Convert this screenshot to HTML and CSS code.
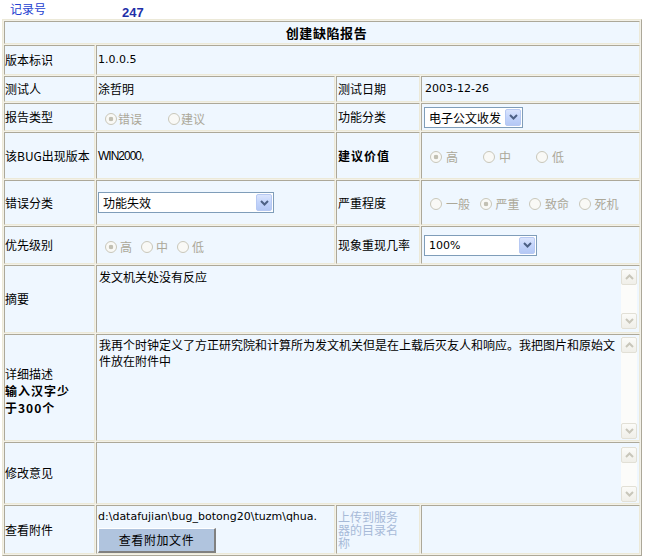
FILE: index.html
```html
<!DOCTYPE html>
<html lang="zh-CN">
<head>
<meta charset="utf-8">
<title>创建缺陷报告</title>
<link rel="stylesheet" href="styles.css">
</head>
<body>
<div class="topbar"><span class="rec-label">记录号</span><span class="rec-no">247</span></div>
<table class="form">
  <colgroup><col class="c1"><col class="c2"><col class="c3"><col class="c4"></colgroup>
  <tr class="h-title"><td colspan="4" class="title">创建缺陷报告</td></tr>
  <tr class="h1"><td class="lbl">版本标识</td><td colspan="3" class="val latin">1.0.0.5</td></tr>
  <tr class="h2"><td class="lbl">测试人</td><td class="val">涂哲明</td><td class="lbl3">测试日期</td><td class="val4 latin date">2003-12-26</td></tr>
  <tr class="h3">
    <td class="lbl">报告类型</td>
    <td class="val"><div class="rg rg-a"><span class="opt"><span class="rb on"></span>错误</span><span class="opt"><span class="rb"></span>建议</span></div></td>
    <td class="lbl3">功能分类</td>
    <td class="val4"><div class="sel sel-a"><span class="sel-text">电子公文收发</span><span class="sel-btn"><svg width="9" height="6" viewBox="0 0 9 6"><polyline points="1,1 4.5,4.5 8,1" fill="none" stroke="#4d6185" stroke-width="2"/></svg></span></div></td>
  </tr>
  <tr class="h4">
    <td class="lbl">该BUG出现版本</td>
    <td class="val win">WIN2000,</td>
    <td class="lbl3 bold">建议价值</td>
    <td class="val4"><div class="rg rg-b"><span class="opt"><span class="rb on"></span>高</span><span class="opt"><span class="rb"></span>中</span><span class="opt"><span class="rb"></span>低</span></div></td>
  </tr>
  <tr class="h5">
    <td class="lbl">错误分类</td>
    <td class="val"><div class="sel sel-b"><span class="sel-text">功能失效</span><span class="sel-btn"><svg width="9" height="6" viewBox="0 0 9 6"><polyline points="1,1 4.5,4.5 8,1" fill="none" stroke="#4d6185" stroke-width="2"/></svg></span></div></td>
    <td class="lbl3">严重程度</td>
    <td class="val4"><div class="rg rg-c"><span class="opt"><span class="rb"></span>一般</span><span class="opt"><span class="rb on"></span>严重</span><span class="opt"><span class="rb"></span>致命</span><span class="opt"><span class="rb"></span>死机</span></div></td>
  </tr>
  <tr class="h6">
    <td class="lbl">优先级别</td>
    <td class="val"><div class="rg rg-d"><span class="opt"><span class="rb on"></span>高</span><span class="opt"><span class="rb"></span>中</span><span class="opt"><span class="rb"></span>低</span></div></td>
    <td class="lbl3">现象重现几率</td>
    <td class="val4"><div class="sel sel-c"><span class="sel-text latin">100%</span><span class="sel-btn"><svg width="9" height="6" viewBox="0 0 9 6"><polyline points="1,1 4.5,4.5 8,1" fill="none" stroke="#4d6185" stroke-width="2"/></svg></span></div></td>
  </tr>
  <tr class="h7">
    <td class="lbl">摘要</td>
    <td colspan="3" class="tacell">
      <div class="ta ta-1">
        <div class="ta-text">发文机关处没有反应</div>
        <div class="sb"><span class="sb-btn"><svg width="9" height="6" viewBox="0 0 9 6"><polyline points="1,5 4.5,1.5 8,5" fill="none" stroke="#c8c6ba" stroke-width="2"/></svg></span><span class="sb-track"></span><span class="sb-btn"><svg width="9" height="6" viewBox="0 0 9 6"><polyline points="1,1 4.5,4.5 8,1" fill="none" stroke="#c8c6ba" stroke-width="2"/></svg></span></div>
      </div>
    </td>
  </tr>
  <tr class="h8">
    <td class="lbl desc">详细描述<br><b class="bold">输入汉字少<br>于300个</b></td>
    <td colspan="3" class="tacell">
      <div class="ta ta-2">
        <div class="ta-text">我再个时钟定义了方正研究院和计算所为发文机关但是在上载后灭友人和响应。我把图片和原始文件放在附件中</div>
        <div class="sb"><span class="sb-btn"><svg width="9" height="6" viewBox="0 0 9 6"><polyline points="1,5 4.5,1.5 8,5" fill="none" stroke="#c8c6ba" stroke-width="2"/></svg></span><span class="sb-track"></span><span class="sb-btn"><svg width="9" height="6" viewBox="0 0 9 6"><polyline points="1,1 4.5,4.5 8,1" fill="none" stroke="#c8c6ba" stroke-width="2"/></svg></span></div>
      </div>
    </td>
  </tr>
  <tr class="h9">
    <td class="lbl">修改意见</td>
    <td colspan="3" class="tacell">
      <div class="ta ta-3">
        <div class="ta-text"></div>
        <div class="sb"><span class="sb-btn"><svg width="9" height="6" viewBox="0 0 9 6"><polyline points="1,5 4.5,1.5 8,5" fill="none" stroke="#c8c6ba" stroke-width="2"/></svg></span><span class="sb-track"></span><span class="sb-btn"><svg width="9" height="6" viewBox="0 0 9 6"><polyline points="1,1 4.5,4.5 8,1" fill="none" stroke="#c8c6ba" stroke-width="2"/></svg></span></div>
      </div>
    </td>
  </tr>
  <tr class="h10">
    <td class="lbl">查看附件</td>
    <td class="val attach">
      <div class="path latin">d:\datafujian\bug_botong20\tuzm\qhua.</div>
      <div class="btn">查看附加文件</div>
    </td>
    <td class="lbl3"><div class="upload">上传到服务器的目录名称</div></td>
    <td class="val4"></td>
  </tr>
</table>
</body>
</html>
```
FILE: styles.css
```css
* { box-sizing: border-box; }

body {
  margin: 0;
  background: #ffffff;
  color: #000000;
  font-family: "Noto Sans CJK SC", "Liberation Sans", sans-serif;
  font-size: 12px;
}

.topbar {
  height: 19px;
  display: flex;
  align-items: flex-start;
}

.rec-label {
  width: 112px;
  margin-left: 10px;
  margin-top: 2px;
  line-height: 14px;
  color: #2541d0;
}

.rec-no {
  margin-top: 6px;
  font-family: "Liberation Sans", sans-serif;
  font-weight: bold;
  font-size: 13px;
  line-height: 13px;
  color: #1f2fa8;
}

.form {
  margin-left: 2px;
  width: 640px;
  table-layout: fixed;
  border-collapse: separate;
  border-spacing: 1px;
  border: 1px solid;
  border-color: #ece9d8 #aca899 #aca899 #ece9d8;
  background: #f3f1e8;
}

.c1 { width: 91px; }
.c2 { width: 239px; }
.c3 { width: 84px; }
.c4 { width: 219px; }

.form td {
  padding: 0;
  border: 1px solid;
  border-color: #aca899 #ece9d8 #ece9d8 #aca899;
  background: #eff7ff;
  vertical-align: middle;
  line-height: 14px;
  white-space: normal;
}

.h-title td { height: 23px; }
.h1 td { height: 30px; }
.h2 td { height: 26px; }
.h3 td { height: 28px; }
.h4 td { height: 47px; }
.h5 td { height: 45px; }
.h6 td { height: 38px; }
.h7 td { height: 68px; }
.h8 td { height: 107px; }
.h9 td { height: 62px; }
.h10 td { height: 49px; }

.form td.title {
  text-align: center;
  font-weight: bold;
  font-size: 13px;
  letter-spacing: 0.6px;
  padding-left: 9px;
}

.form td.lbl { padding-left: 0; }
.form td.val { padding-left: 1px; }
.form td.lbl3 { padding-left: 1px; }
.form td.val4 { padding-left: 2px; }
.form td.date { padding-left: 3px; }

.latin {
  font-family: "DejaVu Sans", "Liberation Sans", sans-serif;
  font-size: 11px;
}

.win {
  font-family: "Liberation Sans", sans-serif;
  letter-spacing: -1px;
}

.bold {
  font-weight: bold;
  letter-spacing: 1px;
}

.form td.desc {
  line-height: 17px;
  padding-top: 6px;
}

/* radios */
.rg {
  display: flex;
  align-items: center;
  margin-top: 3px;
  color: #aca899;
}

.opt {
  display: flex;
  align-items: center;
}

.rb {
  width: 12px;
  height: 12px;
  flex: none;
  border: 1px solid #c9c7ba;
  border-radius: 50%;
  background: #f9f9f6;
}

.rb.on {
  background: radial-gradient(circle, #c2c0b3 0, #c2c0b3 2px, #f9f9f6 2.6px);
}

.rg-a { padding-left: 7px; column-gap: 26px; }
.rg-a .opt { column-gap: 1px; }
.rg-b { padding-left: 6px; column-gap: 25px; }
.rg-b .opt { column-gap: 4px; }
.rg-c { padding-left: 6px; column-gap: 9.5px; }
.rg-c .opt { column-gap: 4px; }
.rg-d { padding-left: 7px; column-gap: 9px; }
.rg-d .opt { column-gap: 3px; }

/* selects */
.sel {
  display: flex;
  align-items: center;
  height: 21px;
  border: 1px solid #7f9db9;
  background: #ffffff;
}

.sel-a { width: 99px; }
.sel-b { width: 176px; }
.sel-c { width: 113px; }

.sel-text {
  flex: 1;
  padding-left: 4px;
  white-space: nowrap;
  line-height: 17px;
}

.sel-btn {
  width: 16px;
  height: 17px;
  margin-right: 1px;
  flex: none;
  display: flex;
  align-items: center;
  justify-content: center;
  border: 1px solid #b7c9f3;
  border-radius: 2px;
  background: linear-gradient(180deg, #dbe5fd 0%, #c3d4fb 50%, #b4c8f5 100%);
}

/* textareas */
.form td.tacell {
  vertical-align: top;
  padding-left: 1px;
}

.ta {
  display: flex;
  margin-right: 2px;
}

.ta-1 { margin-top: 3px; height: 60px; }
.ta-2 { margin-top: 2px; height: 102px; }
.ta-3 { margin-top: 4px; height: 55px; }

.ta-text {
  flex: 1;
  padding: 0 1px;
  line-height: 16px;
}

.sb {
  width: 16px;
  flex: none;
  display: flex;
  flex-direction: column;
  background: #fcfcfa;
}

.sb-btn {
  height: 16px;
  flex: none;
  display: flex;
  align-items: center;
  justify-content: center;
  border: 1px solid #e2e0d6;
  border-radius: 2px;
  background: linear-gradient(180deg, #fbfbf8 0%, #f0efe9 100%);
}

.sb-track { flex: 1; }

/* attachment row */
.form td.attach {
  vertical-align: top;
  padding-top: 4px;
}

.path {
  line-height: 14px;
  white-space: nowrap;
}

.btn {
  margin-top: 4px;
  width: 118px;
  height: 25px;
  display: flex;
  align-items: center;
  justify-content: center;
  background: #b0c4de;
  border-style: solid;
  border-width: 1px 2px 2px 1px;
  border-color: #ffffff #808080 #808080 #ffffff;
  letter-spacing: 0.6px;
}

.upload {
  width: 64px;
  line-height: 13px;
  color: #a7bad8;
}
```
